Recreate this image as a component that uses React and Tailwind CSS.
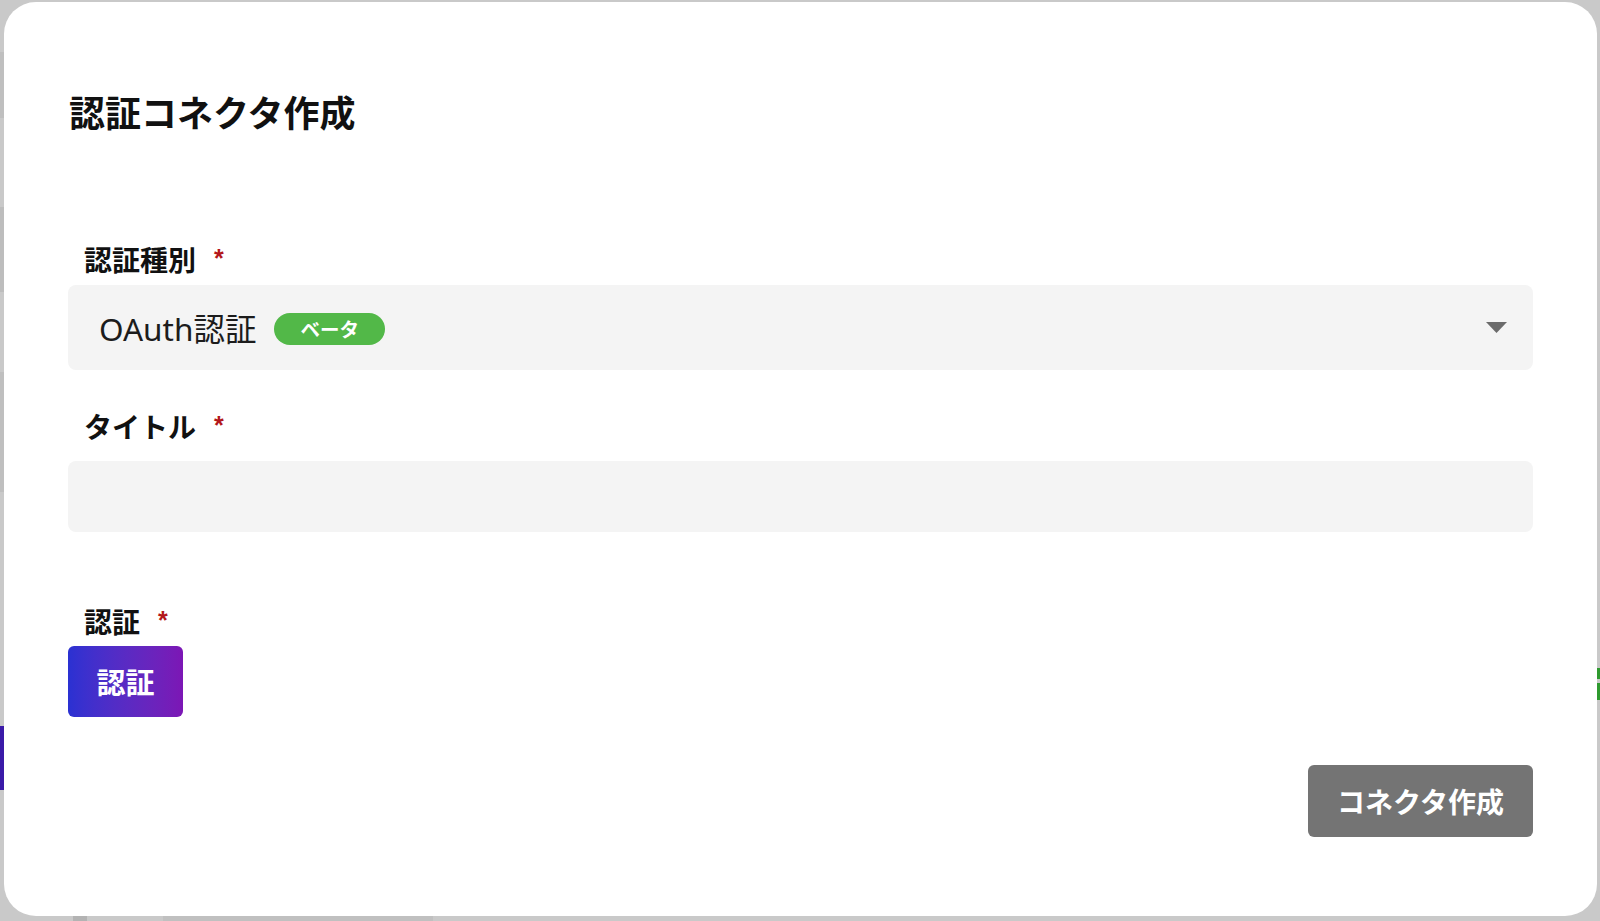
import React from 'react';

const JP = "font-['Noto_Sans_CJK_JP','Noto_Sans',sans-serif]";

// Label with required marker
function FieldLabel({ children }) {
  return (
    <div className="flex items-start pl-[16px]">
      <span className={`${JP} text-[28px] font-bold leading-none text-[#111111]`}>{children}</span>
      <span className="ml-[18px] mt-[1px] text-[25px] font-bold leading-none text-[#b3171a] font-['Liberation_Sans',sans-serif]">*</span>
    </div>
  );
}

export default function App() {
  return (
    <div className="relative w-[1600px] h-[921px] overflow-hidden bg-[#c9c9c9]">
      {/* page underneath the overlay, only edges visible */}
      <div className="absolute left-0 top-[52px] w-[4px] h-[66px] bg-[#bfbfbf]" />
      <div className="absolute left-0 top-[207px] w-[4px] h-[85px] bg-[#bdbdbd]" />
      <div className="absolute left-0 top-[372px] w-[4px] h-[120px] bg-[#bfbfbf]" />
      <div className="absolute left-0 top-[726px] w-[4px] h-[64px] bg-[#3a1aa8]" />
      <div className="absolute right-0 top-[668px] w-[3px] h-[11px] bg-[#2f9a2f]" />
      <div className="absolute right-0 top-[683px] w-[3px] h-[17px] bg-[#2f9a2f]" />
      <div className="absolute left-[73px] bottom-0 w-[14px] h-[5px] bg-[#b3b3b3]" />
      <div className="absolute left-[163px] bottom-0 w-[270px] h-[5px] bg-[#c0c0c0]" />

      <div className="relative ml-[4px] mt-[2px] w-[1593px] h-[914px] bg-white rounded-[32px] px-[64px] pt-[91px] flex flex-col">
        <h1 className={`${JP} text-[36px] font-bold leading-none text-[#111111] pl-[1px]`}>認証コネクタ作成</h1>

        <div className="mt-[116px]">
          <FieldLabel>認証種別</FieldLabel>
        </div>
        <div className="mt-[12px] h-[85px] rounded-[8px] bg-[#f4f4f4] flex items-center pl-[31px] pr-[26px]">
          <span className={`font-['Noto_Sans','Noto_Sans_CJK_JP',sans-serif] text-[31.5px] text-[#1c1c1c] leading-none mt-[2px]`}>OAuth認証</span>
          <span className={`${JP} ml-[18px] h-[32px] px-[26px] rounded-full bg-[#52b848] text-white text-[19.5px] font-bold flex items-center leading-none mt-[2px]`}>ベータ</span>
          <svg className="ml-auto mt-[0px]" width="21" height="11" viewBox="0 0 21 11">
            <polygon points="0,0 21,0 10.5,11" fill="#6b6b6b" />
          </svg>
        </div>

        <div className="mt-[42px]">
          <FieldLabel>タイトル</FieldLabel>
        </div>
        <input className="mt-[21px] h-[71px] rounded-[8px] bg-[#f4f4f4] outline-none px-[31px] text-[28px]" />

        <div className="mt-[75px]">
          <FieldLabel>認証</FieldLabel>
        </div>
        <button className={`${JP} mt-[11px] w-[115px] h-[71px] rounded-[6px] bg-gradient-to-r from-[#2a31d2] to-[#7c16b5] text-white text-[29px] font-bold leading-none`}>
          認証
        </button>

        <div className="mt-[48px] flex justify-end">
          <button className={`${JP} w-[225px] h-[72px] rounded-[6px] bg-[#747474] text-white text-[28px] font-bold leading-none`}>
            コネクタ作成
          </button>
        </div>
      </div>
    </div>
  );
}
